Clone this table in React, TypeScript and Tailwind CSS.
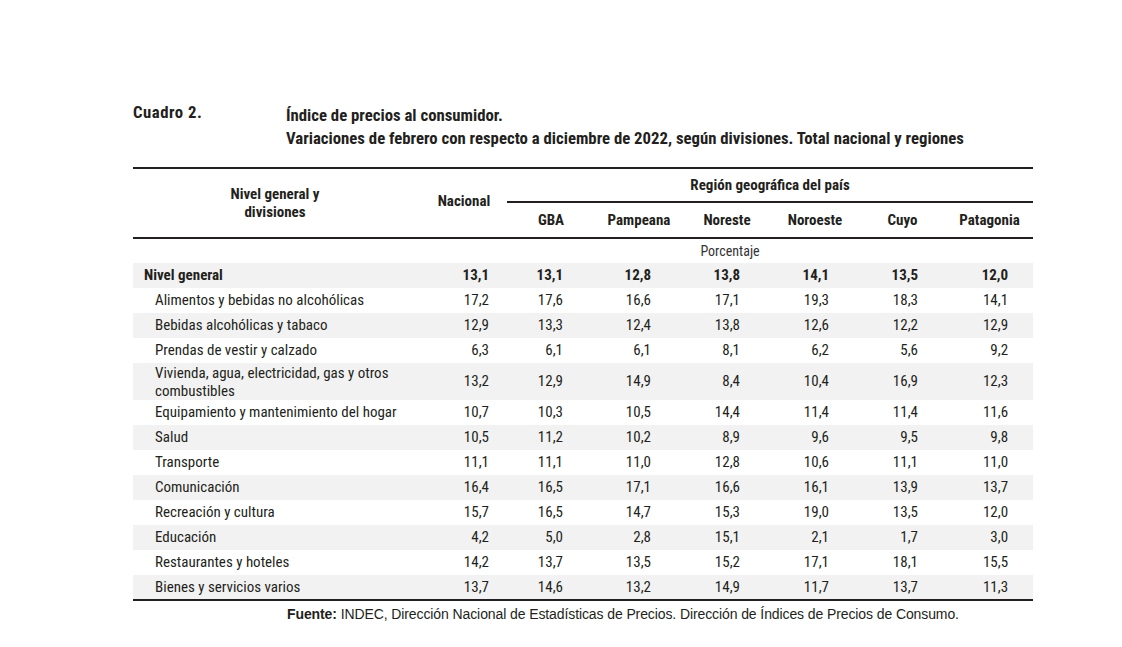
const rows: { label: string; values: string[]; bold?: boolean; tall?: boolean }[] = [
  { label: "Nivel general", values: ["13,1", "13,1", "12,8", "13,8", "14,1", "13,5", "12,0"], bold: true },
  { label: "Alimentos y bebidas no alcohólicas", values: ["17,2", "17,6", "16,6", "17,1", "19,3", "18,3", "14,1"] },
  { label: "Bebidas alcohólicas y tabaco", values: ["12,9", "13,3", "12,4", "13,8", "12,6", "12,2", "12,9"] },
  { label: "Prendas de vestir y calzado", values: ["6,3", "6,1", "6,1", "8,1", "6,2", "5,6", "9,2"] },
  { label: "Vivienda, agua, electricidad, gas y otros combustibles", values: ["13,2", "12,9", "14,9", "8,4", "10,4", "16,9", "12,3"], tall: true },
  { label: "Equipamiento y mantenimiento del hogar", values: ["10,7", "10,3", "10,5", "14,4", "11,4", "11,4", "11,6"] },
  { label: "Salud", values: ["10,5", "11,2", "10,2", "8,9", "9,6", "9,5", "9,8"] },
  { label: "Transporte", values: ["11,1", "11,1", "11,0", "12,8", "10,6", "11,1", "11,0"] },
  { label: "Comunicación", values: ["16,4", "16,5", "17,1", "16,6", "16,1", "13,9", "13,7"] },
  { label: "Recreación y cultura", values: ["15,7", "16,5", "14,7", "15,3", "19,0", "13,5", "12,0"] },
  { label: "Educación", values: ["4,2", "5,0", "2,8", "15,1", "2,1", "1,7", "3,0"] },
  { label: "Restaurantes y hoteles", values: ["14,2", "13,7", "13,5", "15,2", "17,1", "18,1", "15,5"] },
  { label: "Bienes y servicios varios", values: ["13,7", "14,6", "13,2", "14,9", "11,7", "13,7", "11,3"] },
];

const regions = ["GBA", "Pampeana", "Noreste", "Noroeste", "Cuyo", "Patagonia"];

// right padding per value column, so figures line up under the headers
const valuePad = ["pr-[18px]", "pr-[32px]", "pr-[32px]", "pr-[31px]", "pr-[30px]", "pr-[28px]", "pr-[25px]"];

// condensed grotesque look of the PDF table
const narrow = "font-['Roboto',sans-serif] [font-stretch:75%]";

export default function App() {
  return (
    <div className={`w-[1122px] h-[647px] bg-white text-[#231f20] ${narrow}`}>
      <div className="pl-[133px] pt-[101px] w-[1033px]">
        {/* Title */}
        <div className="flex font-bold text-[16.75px] leading-[23px] whitespace-nowrap">
          <div className="w-[153px] tracking-[0.5px]">Cuadro 2.</div>
          <div className="pt-[3px]">
            <div>Índice de precios al consumidor.</div>
            <div>Variaciones de febrero con respecto a diciembre de 2022, según divisiones. Total nacional y regiones</div>
          </div>
        </div>

        <table className="mt-[17px] w-[900px] border-collapse table-fixed text-[15px]">
          <colgroup>
            <col className="w-[284px]" />
            <col className="w-[90px]" />
            <col className="w-[88px]" />
            <col className="w-[88px]" />
            <col className="w-[88px]" />
            <col className="w-[88px]" />
            <col className="w-[87px]" />
            <col className="w-[87px]" />
          </colgroup>
          <thead>
            <tr className="border-t-2 border-[#231f20]">
              <th rowSpan={2} className="font-bold text-center leading-[18px] align-middle pb-[1px]">
                Nivel general y<br />divisiones
              </th>
              <th rowSpan={2} className="font-bold text-center align-middle pb-[4px] pl-[4px]">Nacional</th>
              <th colSpan={6} className="font-bold text-center h-[34px] align-middle border-b-2 border-[#231f20]">
                Región geográfica del país
              </th>
            </tr>
            <tr className="border-b-2 border-[#231f20]">
              {regions.map((r) => (
                <th key={r} className="font-bold text-center h-[36px] align-middle">
                  {r}
                </th>
              ))}
            </tr>
          </thead>
          <tbody>
            <tr>
              <td />
              <td colSpan={7} className="h-[25px] text-center text-[14px] text-[#333] pl-[10px] align-middle">
                Porcentaje
              </td>
            </tr>
            {rows.map((row, i) => (
              <tr key={row.label} className={i % 2 === 0 ? "bg-[#f2f2f2]" : ""}>
                <td
                  className={`align-middle ${row.tall ? "h-[37px] leading-[18px] pr-[4px]" : "h-[25px] whitespace-nowrap"} ${
                    row.bold ? "font-bold pl-[11px]" : "pl-[22px]"
                  }`}
                >
                  {row.label}
                </td>
                {row.values.map((v, j) => (
                  <td key={j} className={`text-right align-middle ${row.bold ? "font-bold" : ""} ${valuePad[j]}`}>
                    {v}
                  </td>
                ))}
              </tr>
            ))}
          </tbody>
          <tfoot>
            <tr className="border-t-2 border-[#231f20]">
              <td
                colSpan={8}
                className="pt-[3px] pl-[154px] text-[14px] whitespace-nowrap font-['Liberation_Sans',Arial,sans-serif] tracking-[-0.1px]"
              >
                <span className="font-bold">Fuente:</span> INDEC, Dirección Nacional de Estadísticas de Precios. Dirección de Índices de Precios de Consumo.
              </td>
            </tr>
          </tfoot>
        </table>
      </div>
    </div>
  );
}
